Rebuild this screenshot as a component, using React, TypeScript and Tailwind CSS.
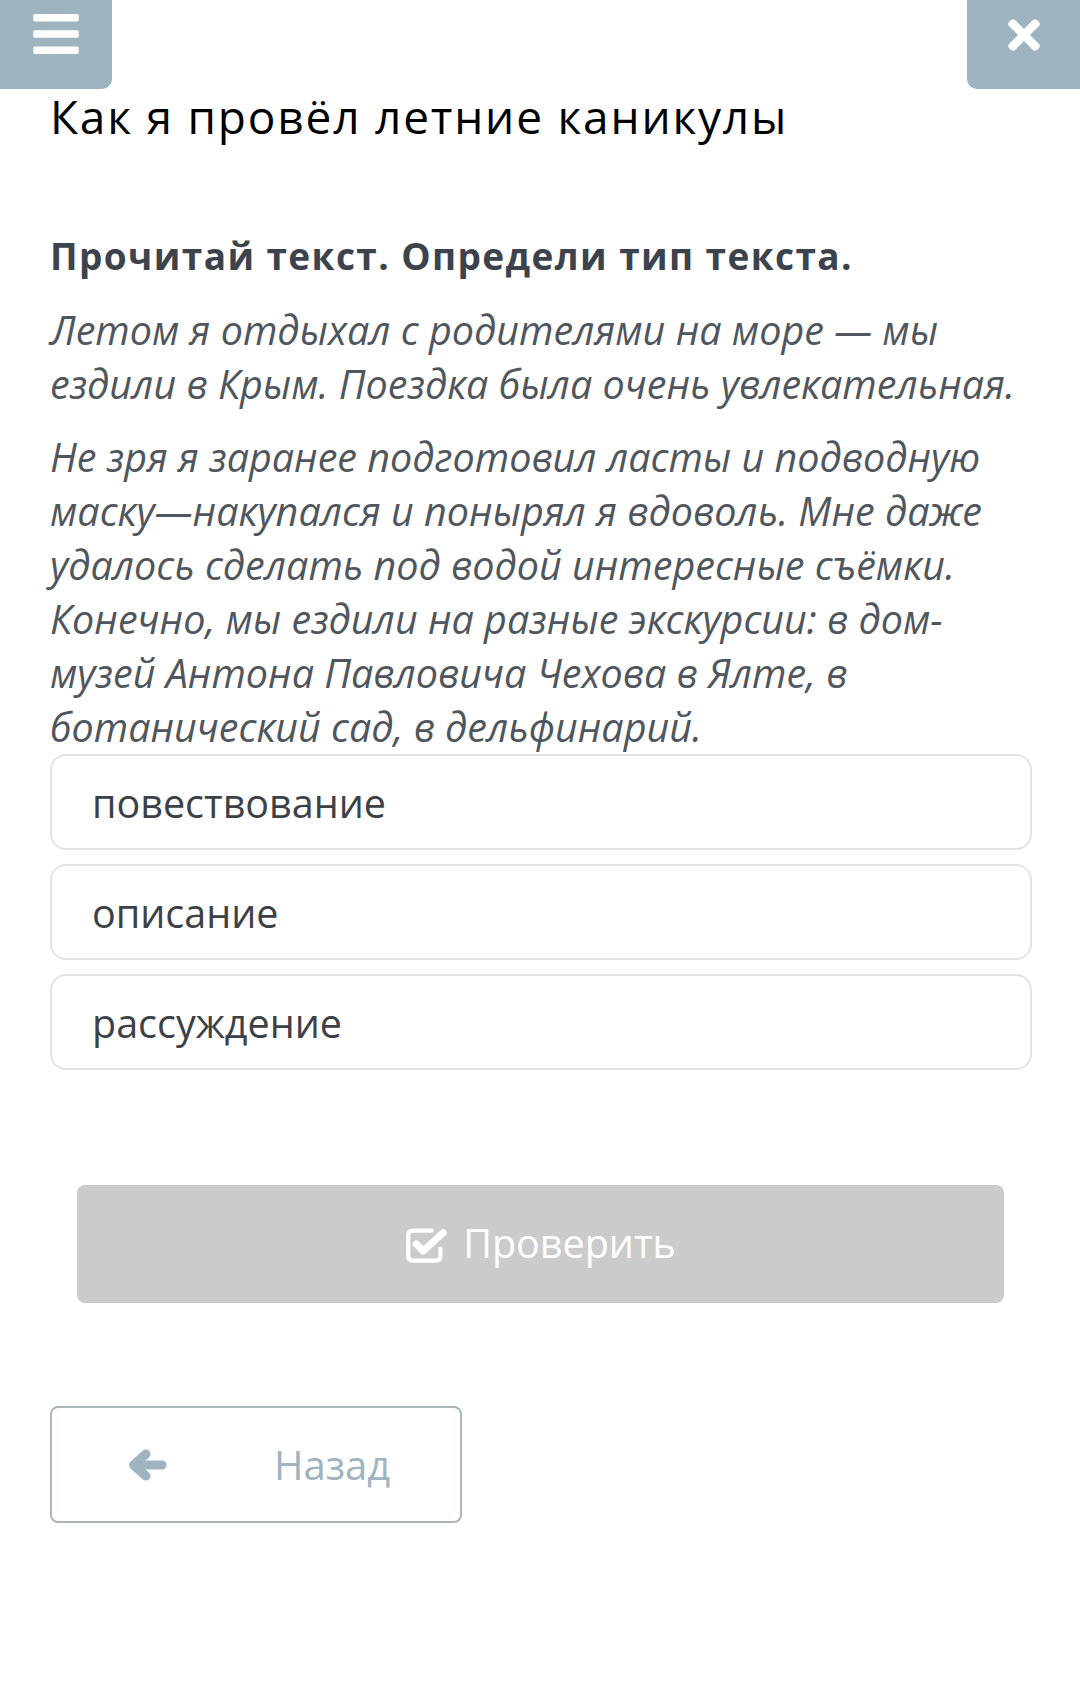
import React from 'react';
import {FaBars, FaTimes} from 'react-icons/fa';

const options = ['повествование', 'описание', 'рассуждение'];

const CheckIcon = () => (
    <svg width="44" height="37" viewBox="0 0 41 34" fill="none" stroke="currentColor" strokeLinecap="round" strokeLinejoin="round">
        <path d="M25 4 H7.5 Q3 4 3 8.5 V27.5 Q3 32 7.5 32 H28.5 Q33 32 33 27.5 V21" strokeWidth="4" />
        <path d="M10.5 16.5 L17 23 L35.5 6" strokeWidth="6.5" />
    </svg>
);

const ArrowIcon = () => (
    <svg width="40" height="34" viewBox="0 0 40 34" fill="none" stroke="currentColor" strokeLinecap="round" strokeLinejoin="round">
        <path d="M35 17 H12" strokeWidth="9" />
        <path d="M19 6 L6.5 17 L19 28" strokeWidth="9" />
    </svg>
);

const App = () => {
    return (
        <div className="w-[1080px] min-h-[1684px] bg-white font-['Open_Sans',sans-serif]">
            <div className="flex justify-between h-[89px]">
                <button className="w-[112px] h-[89px] bg-[#9fb4c1] rounded-br-[10px] flex items-start justify-center pt-[8px]">
                    <FaBars className="text-white w-[52px] h-[52px]" />
                </button>
                <button className="w-[113px] h-[89px] bg-[#9fb4c1] rounded-bl-[10px] flex items-start justify-center pt-[12px]">
                    <FaTimes className="text-white w-[46px] h-[46px]" />
                </button>
            </div>

            <div className="px-[50px]">
                <h1 className="text-[46px] leading-[54px] tracking-[1.8px] text-black">Как я провёл летние каникулы</h1>

                <h2 className="mt-[89px] text-[37px] leading-[48px] tracking-[1.4px] font-bold text-[#3d434c]">
                    Прочитай текст. Определи тип текста.
                </h2>

                <p className="mt-[23px] text-[39.5px] leading-[54px] italic text-[#50565e]">
                    Летом я отдыхал с родителями на море — мы<br />
                    ездили в Крым. Поездка была очень увлекательная.
                </p>
                <p className="mt-[19px] text-[39.5px] leading-[54px] italic text-[#50565e]">
                    Не зря я заранее подготовил ласты и подводную<br />
                    маску—накупался и понырял я вдоволь. Мне даже<br />
                    удалось сделать под водой интересные съёмки.<br />
                    Конечно, мы ездили на разные экскурсии: в дом-<br />
                    музей Антона Павловича Чехова в Ялте, в<br />
                    ботанический сад, в дельфинарий.
                </p>

                <div className="flex flex-col gap-[14px] w-[982px]">
                    {options.map((o) => (
                        <div key={o} className="h-[96px] border-2 border-[#e3e3e3] rounded-[16px] flex items-center px-[40px] pt-[4px] text-[39.5px] text-[#3c4147]">
                            {o}
                        </div>
                    ))}
                </div>

                <button className="mt-[115px] ml-[27px] w-[927px] h-[118px] bg-[#cbcbcb] rounded-[8px] flex items-center justify-center gap-[14px] text-white text-[39.5px]">
                    <CheckIcon />
                    <span>Проверить</span>
                </button>

                <button className="mt-[103px] w-[412px] h-[117px] border-2 border-[#aab6bd] rounded-[8px] flex items-center text-[#a0b3c0] text-[40px]">
                    <span className="ml-[75px] flex"><ArrowIcon /></span>
                    <span className="ml-[107px]">Назад</span>
                </button>
            </div>
        </div>
    );
};

export default App;
